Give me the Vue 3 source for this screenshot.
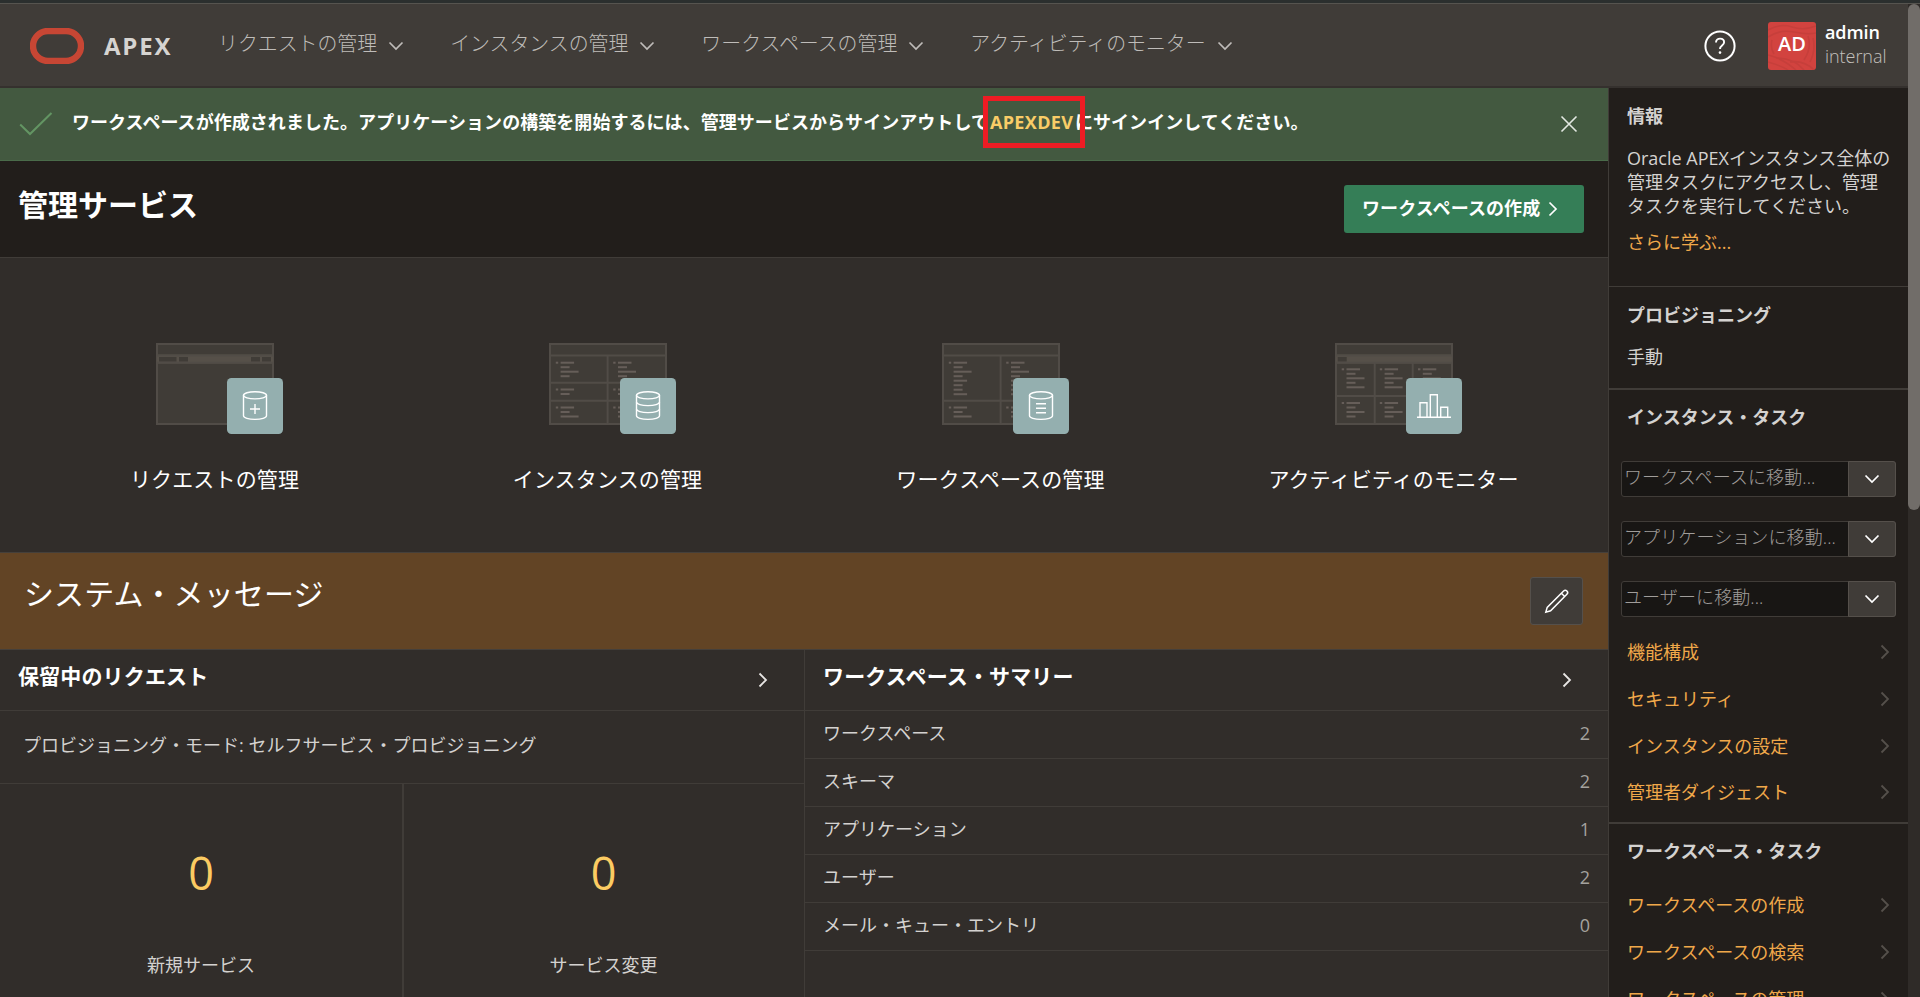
<template>
  <div class="page">
    <div class="window-edge"></div>
    <div class="viewport">
      <div class="app">
        <header class="header">
          <svg class="logo" width="54" height="36" viewBox="0 0 54 36">
            <rect x="3" y="3" width="48" height="30" rx="15" fill="none" stroke="#c74634" stroke-width="6.4" />
          </svg>
          <span class="brand">APEX</span>
          <nav class="nav">
            <a v-for="item in navItems" :key="item" class="nav-item">
              <span>{{ item }}</span>
              <svg width="16" height="10" viewBox="0 0 16 10">
                <path d="M1.5 1.5 8 8l6.5-6.5" fill="none" stroke="currentColor" stroke-width="1.7" />
              </svg>
            </a>
          </nav>
          <svg class="help" width="32" height="32" viewBox="0 0 32 32">
            <circle cx="16" cy="16" r="14.6" fill="none" stroke="#fff" stroke-width="2" />
            <path d="M12 12.6c0-2.5 1.7-4 4.1-4s4 1.5 4 3.7c0 3.2-4.1 3.3-4.1 6.6" fill="none" stroke="#fff" stroke-width="1.9" />
            <circle cx="16" cy="22.6" r="1.3" fill="#fff" />
          </svg>
          <div class="avatar">
            <svg class="avatar-bg" width="48" height="48" viewBox="0 0 48 48">
              <g fill="none" stroke="#c63f3b" stroke-width="1.6">
                <path d="M0 8Q12 1 24 5T48 4M0 15Q12 7 26 10T48 11M0 40Q14 44 20 48M0 33Q14 36 28 48M8 36Q26 36 36 48M22 40Q36 38 46 48M40 14Q44 26 36 38M45 16Q48 28 42 40M4 18Q2 26 6 32" />
              </g>
            </svg>
            <span class="avatar-text">AD</span>
          </div>
          <div class="account">
            <span class="account-name">admin</span>
            <span class="account-space">internal</span>
          </div>
        </header>

        <div class="body">
          <main class="main">
            <div class="alert">
              <svg class="alert-check" width="34" height="24" viewBox="0 0 34 24">
                <path d="M1.2 12.5 11 22 32.5 1" fill="none" stroke="#639563" stroke-width="2" />
              </svg>
              <p class="alert-text">ワークスペースが作成されました。アプリケーションの構築を開始するには、管理サービスからサインアウトして<span class="alert-link">APEXDEV<span class="marker"></span></span>にサインインしてください。</p>
              <svg class="alert-close" width="18" height="18" viewBox="0 0 18 18">
                <path d="M1.5 1.5l15 15M16.5 1.5l-15 15" fill="none" stroke="#e3e8e2" stroke-width="1.6" />
              </svg>
            </div>

            <div class="hero">
              <h1>管理サービス</h1>
              <button class="create-button">
                <span>ワークスペースの作成</span>
                <svg width="10" height="16" viewBox="0 0 10 16">
                  <path d="M1.5 1.5 8 8l-6.5 6.5" fill="none" stroke="#fff" stroke-width="1.7" />
                </svg>
              </button>
            </div>

            <div class="cards">
              <a v-for="card in cards" :key="card.label" class="card">
                <svg class="card-art" width="118" height="92" viewBox="0 0 118 92">
                  <rect x="1" y="1" width="116" height="80" fill="#403c37" stroke="#514c47" stroke-width="2" />
                  <rect v-if="card.band" x="1" y="11.5" width="116" height="9" fill="#565049" />
                  <rect v-for="b in card.blocks" :key="b[0]" :x="b[0]" y="14" :width="b[1]" height="4.6" fill="#403c37" />
                  <path :d="card.grid" fill="none" stroke="#514c47" stroke-width="2" />
                  <g v-for="(l, i) in card.lines" :key="i" fill="#665e59">
                    <rect v-if="l[3]" :x="l[0] - 4.8" :y="l[1] - 1" width="2.4" height="2" />
                    <rect :x="l[0]" :y="l[1] - 1" :width="l[2]" height="2" />
                  </g>
                  <rect x="71" y="35" width="56" height="56" rx="4.5" fill="#94afaf" />
                  <g transform="translate(71 35)" fill="none" stroke="#fff" stroke-width="1.4">
                    <template v-if="card.icon !== 'chart'">
                      <ellipse cx="28" cy="17.3" rx="11.5" ry="3.6" />
                      <path d="M16.5 17.3v20.5c0 2 5 3.6 11.5 3.6s11.5-1.6 11.5-3.6V17.3" />
                    </template>
                    <path :d="icons[card.icon]" />
                  </g>
                </svg>
                <span class="card-label">{{ card.label }}</span>
              </a>
            </div>

            <div class="system">
              <h2>システム・メッセージ</h2>
              <button class="edit-button">
                <svg width="28" height="28" viewBox="0 0 28 28">
                  <path d="M2.8 25.2 4.2 20.4 20.6 4a2.3 2.3 0 0 1 3.3 3.3L7.6 23.8zM18.4 6.2l3.3 3.3" fill="none" stroke="#fff" stroke-width="1.5" />
                </svg>
              </button>
            </div>

            <div class="panels">
              <section class="panel">
                <div class="panel-head">
                  <h3>保留中のリクエスト</h3>
                  <svg width="10" height="16" viewBox="0 0 10 16"><path :d="chevronRight" /></svg>
                </div>
                <div class="mode">プロビジョニング・モード: セルフサービス・プロビジョニング</div>
                <div class="stats">
                  <div v-for="stat in stats" :key="stat.label" class="stat">
                    <span class="stat-value">{{ stat.value }}</span>
                    <span class="stat-label">{{ stat.label }}</span>
                  </div>
                </div>
              </section>
              <section class="panel">
                <div class="panel-head">
                  <h3>ワークスペース・サマリー</h3>
                  <svg width="10" height="16" viewBox="0 0 10 16"><path :d="chevronRight" /></svg>
                </div>
                <div v-for="row in summary" :key="row.label" class="summary-row">
                  <span>{{ row.label }}</span>
                  <span class="summary-count">{{ row.count }}</span>
                </div>
              </section>
            </div>
          </main>

          <aside class="side">
            <section class="side-section info">
              <h4>情報</h4>
              <p>Oracle APEXインスタンス全体の<br />管理タスクにアクセスし、管理<br />タスクを実行してください。</p>
              <a class="more">さらに学ぶ...</a>
            </section>
            <section class="side-section provisioning">
              <h4>プロビジョニング</h4>
              <p>手動</p>
            </section>
            <section class="side-section tasks">
              <h4>インスタンス・タスク</h4>
              <div class="fields">
                <div v-for="field in fields" :key="field" class="field">
                  <span class="field-text">{{ field }}</span>
                  <span class="field-button">
                    <svg width="16" height="10" viewBox="0 0 16 10">
                      <path d="M1.5 1.5 8 8l6.5-6.5" fill="none" stroke="#fff" stroke-width="1.7" />
                    </svg>
                  </span>
                </div>
              </div>
              <a v-for="link in instanceLinks" :key="link" class="side-link">
                {{ link }}
                <svg width="10" height="16" viewBox="0 0 10 16"><path :d="chevronRight" /></svg>
              </a>
            </section>
            <section class="side-section workspace">
              <h4>ワークスペース・タスク</h4>
              <a v-for="link in workspaceLinks" :key="link" class="side-link">
                {{ link }}
                <svg width="10" height="16" viewBox="0 0 10 16"><path :d="chevronRight" /></svg>
              </a>
            </section>
          </aside>
        </div>
      </div>
      <div class="scrollbar">
        <div class="scroll-thumb"></div>
      </div>
    </div>
  </div>
</template>

<script setup>
const chevronRight = 'M1.5 1.5 8 8l-6.5 6.5'

const navItems = [
  'リクエストの管理',
  'インスタンスの管理',
  'ワークスペースの管理',
  'アクティビティのモニター'
]

const icons = {
  add: 'M28 26v10M23 31h10',
  database: 'M16.5 24c0 2 5 3.6 11.5 3.6s11.5-1.6 11.5-3.6M16.5 31c0 2 5 3.6 11.5 3.6s11.5-1.6 11.5-3.6',
  list: 'M23 25.8h10M23 30.3h10M23 34.8h10',
  chart: 'M11 39.3h34M14 39.3V24.7h7v14.6M24.3 39.3V16.7h7v22.6M34.7 39.3V29.3h7v10'
}

// 箇条書きの線: [x, y, 幅, 先頭の点]
const bullets = (x, y, widths) => widths.map((w, i) => [x, y + i * 4.5, w, i === 0])

const cards = [
  {
    label: 'リクエストの管理',
    icon: 'add',
    band: true,
    blocks: [[3, 17.5], [23, 9], [95, 9], [106, 9]],
    grid: 'M1 12.5H117M1 19.7H117',
    lines: []
  },
  {
    label: 'インスタンスの管理',
    icon: 'database',
    band: false,
    blocks: [],
    grid: 'M1 12.5H117M58.6 12.5V81M1 39.7H117M1 57.7H117',
    lines: [11.6, 69].flatMap(x => [
      ...bullets(x, 19.7, [13.5, 9, 18, 9]),
      ...bullets(x, 46.5, [13.5, 9]),
      ...bullets(x, 64.5, [13.5, 9, 18])
    ])
  },
  {
    label: 'ワークスペースの管理',
    icon: 'list',
    band: false,
    blocks: [],
    grid: 'M1 12.5H117M58.6 12.5V81M1 57.7H117',
    lines: [11.6, 69].flatMap(x => [
      ...bullets(x, 19.7, [13.5, 9, 18, 9, 13.5, 9, 9, 13.5]),
      ...bullets(x, 64.5, [13.5, 9, 18])
    ])
  },
  {
    label: 'アクティビティのモニター',
    icon: 'chart',
    band: true,
    blocks: [[2.7, 9]],
    grid: 'M1 12.5H117M1 19.7H117M39.7 20V81M77.7 20V81M1 53H117',
    lines: [11.5, 49.6, 87.8].flatMap(x => [
      ...bullets(x, 26.3, [13.5, 9, 18, 9, 18]),
      ...bullets(x, 60, [13.5, 9, 18, 9])
    ])
  }
]

const stats = [
  { value: 0, label: '新規サービス' },
  { value: 0, label: 'サービス変更' }
]

const summary = [
  { label: 'ワークスペース', count: 2 },
  { label: 'スキーマ', count: 2 },
  { label: 'アプリケーション', count: 1 },
  { label: 'ユーザー', count: 2 },
  { label: 'メール・キュー・エントリ', count: 0 }
]

const fields = ['ワークスペースに移動...', 'アプリケーションに移動...', 'ユーザーに移動...']

const instanceLinks = ['機能構成', 'セキュリティ', 'インスタンスの設定', '管理者ダイジェスト']
const workspaceLinks = ['ワークスペースの作成', 'ワークスペースの検索', 'ワークスペースの管理']
</script>

<style>
body {
  margin: 0;
  overflow: hidden;
  background: #312d2a;
}
</style>

<style scoped>
* {
  box-sizing: border-box;
}

h1,
h2,
h3,
h4,
p {
  margin: 0;
}

svg {
  display: block;
  flex: none;
}

button {
  font: inherit;
  padding: 0;
}

.page {
  height: 997px;
  overflow: hidden;
  font-family: 'Open Sans', 'Noto Sans CJK JP', sans-serif;
  font-size: 18px;
  line-height: 24px;
  color: #d4d2d0;
  white-space: nowrap;
}

.window-edge {
  height: 4px;
  background: #2b2f2e;
  border-bottom: 1px solid #56544f;
}

.viewport {
  display: flex;
  height: 993px;
}

.app {
  width: 1908px;
  overflow: hidden;
}

/* ヘッダー */
.header {
  display: flex;
  align-items: center;
  height: 84px;
  padding: 0 22px 0 30px;
  background: #403c38;
  border-bottom: 2px solid #35312e;
}

.logo {
  margin-top: 1px;
}

.brand {
  width: 68px;
  margin: 2px 0 0 20px;
  font-size: 24px;
  font-weight: 700;
  letter-spacing: 1.8px;
  color: #d6d4d1;
}

.nav {
  display: flex;
  gap: 46px;
  margin: -3px 0 0 46px;
  font-size: 19.9px;
  font-weight: 300;
  color: #bfbcb9;
}

.nav-item {
  display: flex;
  align-items: center;
  gap: 11px;
}

.nav-item svg {
  margin-top: 5px;
}

.help {
  margin-top: 2px;
  margin-left: auto;
}

.avatar {
  position: relative;
  display: flex;
  justify-content: center;
  width: 48px;
  height: 48px;
  margin-top: 2px;
  margin-left: 32px;
  overflow: hidden;
  border-radius: 3px;
  background: #d2433f;
}

.avatar-bg {
  position: absolute;
  inset: 0;
}

.avatar-text {
  position: relative;
  font-size: 20px;
  font-weight: 600;
  line-height: 43px;
  color: #fff;
}

.account {
  display: flex;
  flex-direction: column;
  width: 61px;
  margin: -3px 0 0 9px;
}

.account-name {
  font-weight: 600;
  letter-spacing: -0.1px;
  color: #fff;
}

.account-space {
  font-weight: 300;
  letter-spacing: -0.05px;
  color: #c4c1be;
}

.body {
  display: flex;
  height: 909px;
}

.main {
  width: 1608px;
  background: #312d2a;
}

/* 通知 */
.alert {
  display: flex;
  align-items: center;
  height: 73px;
  padding: 0 30px 0 19px;
  background: #435940;
  border-bottom: 1px solid #4a6b4a;
}

.alert-text {
  margin: -5px 0 0 19px;
  font-weight: 700;
  letter-spacing: 0.05px;
  color: #fff;
}

.alert-link {
  position: relative;
  display: inline-block;
  width: 86px;
  padding-left: 1px;
  color: #f9cc67;
  letter-spacing: 0.35px;
}

.marker {
  position: absolute;
  left: -6px;
  top: -14px;
  width: 102px;
  height: 52px;
  border: 5px solid #ed1c24;
}

.alert-close {
  margin-left: auto;
}

.hero {
  display: flex;
  align-items: center;
  justify-content: space-between;
  height: 97px;
  padding: 0 24px 0 18px;
  background: #221e1b;
  border-bottom: 1px solid #403c38;
}

h1 {
  margin-top: -8px;
  font-size: 30px;
  font-weight: 700;
  line-height: 36px;
  color: #fff;
}

.create-button {
  display: flex;
  align-items: center;
  gap: 8px;
  width: 240px;
  height: 48px;
  padding-left: 18px;
  border: none;
  border-radius: 3px;
  background: #357e57;
  color: #fff;
  font-weight: 700;
}

.create-button span {
  margin-top: -3px;
  letter-spacing: 0.1px;
}

/* カード */
.cards {
  display: grid;
  grid-template-columns: repeat(4, 393px);
  height: 294px;
  padding: 85px 18px 0;
}

.card {
  display: flex;
  flex-direction: column;
  align-items: center;
}

.card-art {
  overflow: visible;
}

.card-label {
  margin-top: 30px;
  font-size: 21px;
  line-height: 28px;
  letter-spacing: 0.15px;
  color: #fff;
}

.system {
  display: flex;
  align-items: center;
  justify-content: space-between;
  height: 98px;
  padding: 0 25px 0 24px;
  background: #624425;
  border: solid #45403b;
  border-width: 1px 0;
}

h2 {
  margin-top: -14px;
  font-size: 30px;
  font-weight: 400;
  line-height: 36px;
  letter-spacing: 0.1px;
  color: #fff;
}

.edit-button {
  display: flex;
  align-items: center;
  justify-content: center;
  width: 53px;
  height: 48px;
  border: 1px solid #55504b;
  border-radius: 3px;
  background: #403c38;
}

/* パネル */
.panels {
  display: grid;
  grid-template-columns: 804px 804px;
  height: 347px;
}

.panel + .panel {
  border-left: 1px solid #403c38;
}

.panel-head {
  display: flex;
  align-items: center;
  justify-content: space-between;
  height: 61px;
  padding: 0 36px 0 18px;
  border-bottom: 1px solid #403c38;
}

.panel-head svg,
.side-link svg {
  fill: none;
  stroke: #e8e6e4;
  stroke-width: 1.8;
}

h3 {
  margin-top: -8px;
  font-size: 21px;
  font-weight: 700;
  line-height: 28px;
  letter-spacing: 0.15px;
  color: #fff;
}

.mode {
  height: 73px;
  padding: 22px 23px;
  border-bottom: 1px solid #403c38;
}

.stats {
  display: grid;
  grid-template-columns: 404px 399px;
  height: 213px;
}

.stat {
  display: flex;
  flex-direction: column;
  align-items: center;
}

.stat:first-child {
  border-right: 2px solid #403c38;
}

.stat-value {
  margin-top: 64px;
  font-size: 45px;
  line-height: 50px;
  color: #fbcb62;
}

.stat-label {
  margin-top: 55px;
}

.summary-row {
  display: flex;
  justify-content: space-between;
  height: 48px;
  padding: 10px 18px 0;
  border-bottom: 1px solid #403c38;
}

.summary-count {
  color: #a5a29f;
}

/* サイドバー */
.side {
  width: 300px;
  height: 909px;
  overflow: hidden;
  border-left: 1px solid #403c38;
  background: #221e1b;
}

.side-section {
  padding: 0 18px;
  border-bottom: 2px solid #403c38;
}

h4 {
  padding-top: 16px;
  font-size: 18px;
  font-weight: 700;
  line-height: 24px;
}

.info {
  height: 199px;
  border-bottom-width: 1px;
}

.info p {
  margin-top: 18px;
}

.more {
  display: block;
  margin-top: 12px;
  color: #f0a84a;
}

.provisioning {
  height: 103px;
}

.provisioning p {
  margin-top: 18px;
}

.tasks {
  height: 434px;
}

.tasks h4,
.workspace h4 {
  padding-top: 15px;
}

.fields {
  display: flex;
  flex-direction: column;
  gap: 24px;
  width: 275px;
  margin: 32px 0 12px -6px;
}

.field {
  display: flex;
  height: 36px;
  border: 1px solid #403c38;
  border-radius: 3px;
  background: #181614;
}

.field-text {
  flex: 1;
  padding: 3px 0 0 2px;
  font-weight: 300;
  letter-spacing: 0.1px;
  color: #a09d9a;
}

.field-button {
  display: flex;
  align-items: center;
  justify-content: center;
  width: 48px;
  margin: -1px;
  border: 1px solid #55504b;
  border-radius: 0 3px 3px 0;
  background: #403c38;
}

.side-link {
  display: flex;
  align-items: center;
  justify-content: space-between;
  height: 46.67px;
  color: #f0a84a;
}

.side-link svg {
  stroke: #55504b;
}

.workspace .side-link:first-of-type {
  margin-top: 19px;
}

.scrollbar {
  width: 12px;
  background: #2f2b28;
}

.scroll-thumb {
  height: 506px;
  border-radius: 6px;
  background: #716d69;
}
</style>
